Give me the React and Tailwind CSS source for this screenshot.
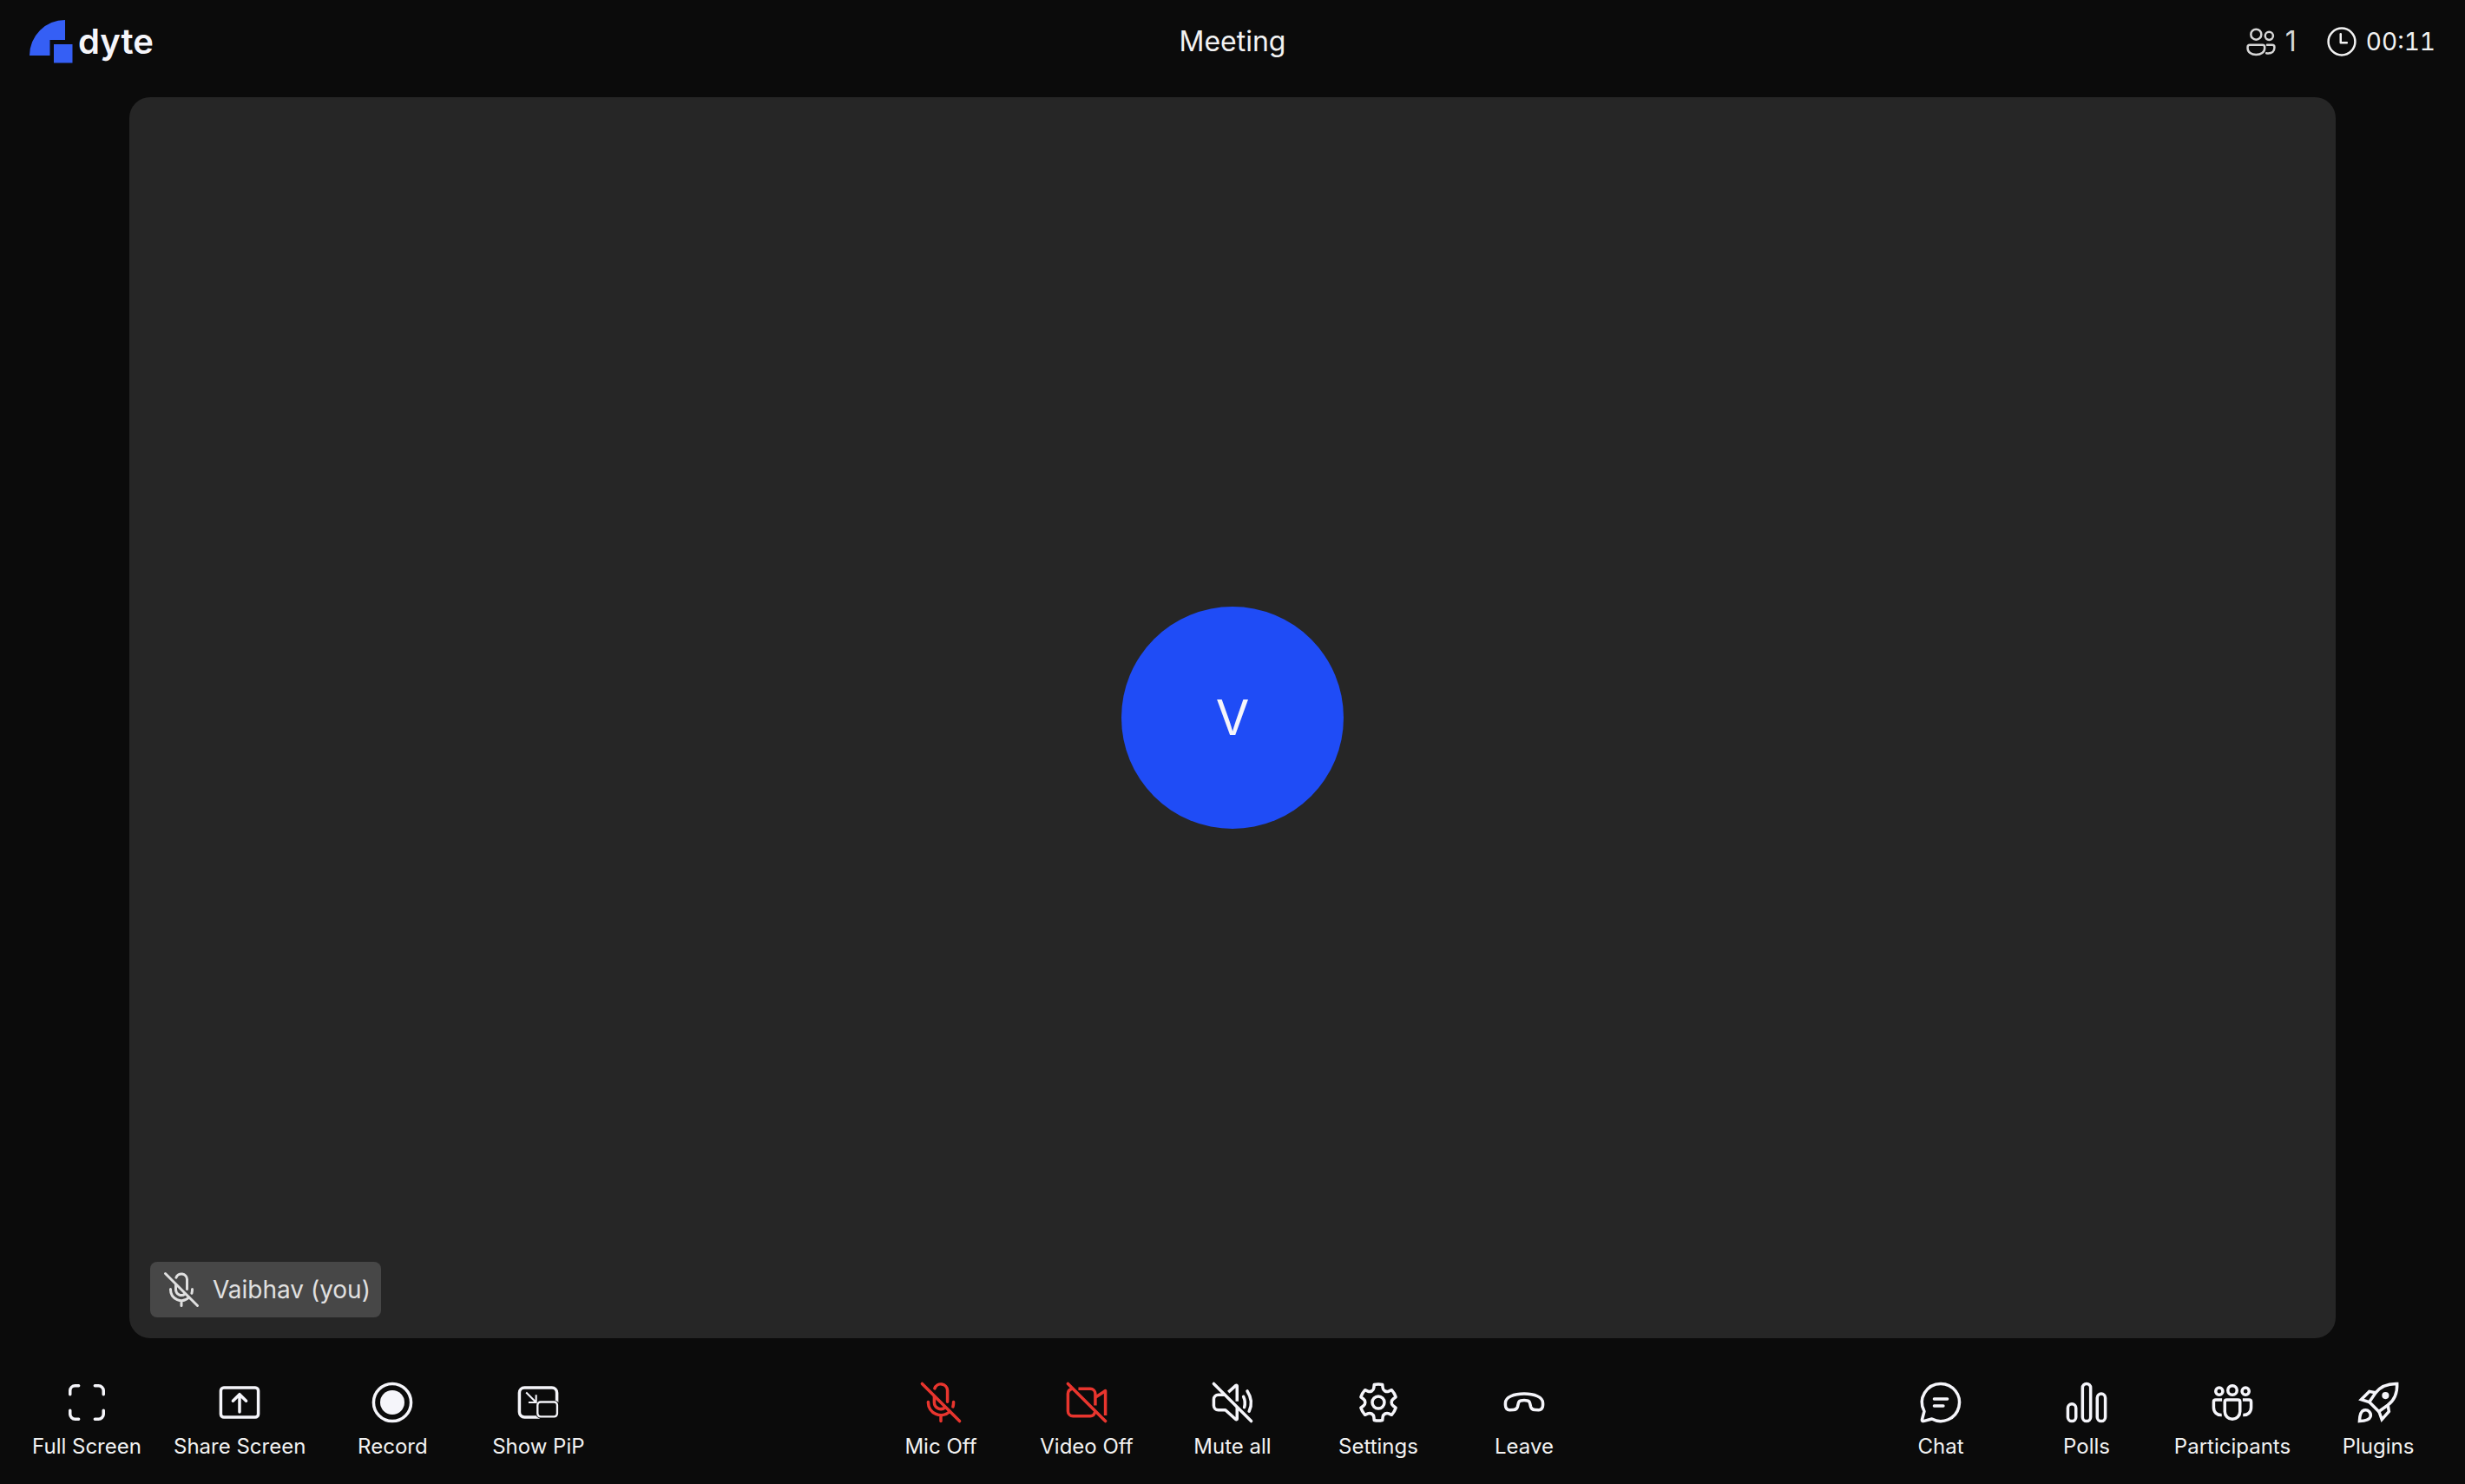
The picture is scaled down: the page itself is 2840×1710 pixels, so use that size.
import React from "react";

function Icon({ className = "size-14", children }) {
  return (
    <svg
      viewBox="0 0 24 24"
      fill="none"
      stroke="currentColor"
      strokeWidth="1.5"
      strokeLinecap="round"
      strokeLinejoin="round"
      aria-hidden="true"
      className={`shrink-0 ${className}`}
    >
      {children}
    </svg>
  );
}

const FullScreenIcon = () => (
  <Icon>
    <path d="M3.75 8V6.25a2.5 2.5 0 0 1 2.5-2.5H8M16 3.75h1.75a2.5 2.5 0 0 1 2.5 2.5V8M20.25 16v1.75a2.5 2.5 0 0 1-2.5 2.5H16M8 20.25H6.25a2.5 2.5 0 0 1-2.5-2.5V16" />
  </Icon>
);

const ShareScreenIcon = () => (
  <Icon>
    <rect x="2.75" y="4.75" width="18.5" height="14.5" rx="1.5" />
    <path d="M12 16.75V8.1M8.75 11.25 12 8l3.25 3.25" />
  </Icon>
);

const RecordIcon = () => (
  <Icon>
    <circle cx="12" cy="12" r="9.25" />
    <circle cx="12" cy="12" r="6" fill="currentColor" stroke="none" />
  </Icon>
);

const PipIcon = () => (
  <Icon>
    <path
      strokeLinecap="butt"
      d="M21.25 12V7.25a2.5 2.5 0 0 0-2.5-2.5H5.25a2.5 2.5 0 0 0-2.5 2.5v9.5a2.500 2.500 0 0 0 2.500 2.500h7.500"
    />
    <rect x="11.700" y="11.800" width="9.700" height="7.200" rx="1.500" stroke="#0b0b0b" strokeWidth="1.800" />
    <rect x="11.700" y="11.800" width="9.700" height="7.200" rx="1.500" strokeWidth="1" />
    <path strokeWidth="0.9" strokeLinecap="square" strokeLinejoin="miter" d="m6.400 7.400 4.400 4.400M11 8.700V12H7.700" />
  </Icon>
);

const MicOffIcon = ({ className }) => (
  <Icon className={className}>
    <path d="m2.75 2.75 18.5 18.5" />
    <path d="M8.95 5.1A3.25 3.25 0 0 1 15.25 6v5.7" />
    <path strokeLinecap="butt" d="M8.75 8.75V12a3.25 3.25 0 0 0 5.3 2.5" />
    <path d="M5.75 11.75v.25a6.25 6.25 0 0 0 10.6 4.5M12 18.4v2.85M18.25 11.75V12c0 .75-.1 1.45-.3 2.1" />
  </Icon>
);

const VideoOffIcon = () => (
  <Icon>
    <path d="m2.75 2.75 18.5 18.5" />
    <path strokeLinecap="butt" d="M7.9 5.25h5.85a2.5 2.5 0 0 1 2.5 2.5v5.8" />
    <path d="M4.6 5.35a2.5 2.5 0 0 0-1.85 2.4v8.5a2.5 2.5 0 0 0 2.5 2.5h8.5a2.5 2.5 0 0 0 2.3-1.9" />
    <path strokeLinecap="butt" d="m16.4 9.4 4.85-3.15v12.2" />
  </Icon>
);

const MuteAllIcon = () => (
  <Icon>
    <path d="m2.75 2.75 18.5 18.5" />
    <path strokeLinecap="butt" d="M9.95 6.9 13.7 3.6c.25-.2.55-.05.55.25v7.6" />
    <path d="M8 8.25H5a2.25 2.25 0 0 0-2.25 2.25v3A2.25 2.25 0 0 0 5 15.75h3.5l5.1 4.6c.25.2.65.05.65-.25v-5.3" />
    <path d="M17.4 9.1c.8 1.7.95 3.5.45 5.3M19.3 6.4c2.1 3.2 2.4 6.8.9 10" />
  </Icon>
);

const SettingsIcon = () => (
  <Icon>
    <path
      fill="currentColor"
      stroke="none"
      d="M12.012 2.25c.734.008 1.466.093 2.182.253a.75.75 0 0 1 .582.649l.17 1.527a1.384 1.384 0 0 0 1.927 1.116l1.401-.615a.75.75 0 0 1 .85.174 9.792 9.792 0 0 1 2.204 3.792.75.75 0 0 1-.271.825l-1.242.916a1.381 1.381 0 0 0 0 2.226l1.243.915a.75.75 0 0 1 .272.826 9.797 9.797 0 0 1-2.204 3.792.75.75 0 0 1-.848.175l-1.407-.617a1.38 1.38 0 0 0-1.926 1.114l-.169 1.526a.75.75 0 0 1-.572.647 9.518 9.518 0 0 1-4.406 0 .75.75 0 0 1-.572-.647l-.168-1.524a1.382 1.382 0 0 0-1.926-1.11l-1.406.616a.75.75 0 0 1-.849-.175 9.798 9.798 0 0 1-2.204-3.796.75.75 0 0 1 .272-.826l1.243-.916a1.38 1.38 0 0 0 0-2.226l-1.243-.914a.75.75 0 0 1-.271-.826 9.793 9.793 0 0 1 2.204-3.792.75.75 0 0 1 .85-.174l1.4.615a1.387 1.387 0 0 0 1.93-1.118l.17-1.526a.75.75 0 0 1 .583-.65c.717-.159 1.45-.243 2.201-.252Zm0 1.5a9.135 9.135 0 0 0-1.354.117l-.109.977A2.886 2.886 0 0 1 6.525 7.17l-.898-.394a8.293 8.293 0 0 0-1.348 2.317l.798.587a2.881 2.881 0 0 1 0 4.643l-.799.588c.32.842.776 1.626 1.348 2.322l.905-.397a2.882 2.882 0 0 1 4.017 2.318l.11.984c.889.15 1.798.15 2.687 0l.11-.984a2.881 2.881 0 0 1 4.018-2.322l.905.396a8.296 8.296 0 0 0 1.347-2.318l-.798-.588a2.881 2.881 0 0 1 0-4.643l.796-.587a8.293 8.293 0 0 0-1.348-2.317l-.896.393a2.884 2.884 0 0 1-4.023-2.324l-.11-.976a8.988 8.988 0 0 0-1.333-.117ZM12 8.25a3.75 3.75 0 1 1 0 7.5 3.75 3.75 0 0 1 0-7.5Zm0 1.5a2.25 2.25 0 1 0 0 4.5 2.25 2.25 0 0 0 0-4.5Z"
    />
  </Icon>
);

const LeaveIcon = () => (
  <Icon>
    <path d="M2.75 12.3v1c0 1.5.9 2.5 2.1 2.45l1.9-.1c1-.05 1.75-.6 2-1.5l.45-1.9c.15-.65.55-1.05 1.15-1.150a10 10 0 0 1 3.300 0c.6.1 1 .5 1.150 1.150l.450 1.900c.25.9 1 1.450 2 1.500l1.900.1c1.200.05 2.100-.95 2.100-2.450v-1C21.250 9.300 17 7.750 12 7.750S2.750 9.300 2.750 12.300Z" />
  </Icon>
);

const ChatIcon = () => (
  <Icon>
    <path d="M12 2.75a9.25 9.25 0 1 1-4.4 17.4l-4.2 1.1a.55.55 0 0 1-.65-.65l1.1-4.2A9.25 9.25 0 0 1 12 2.75ZM8.75 10.25h6.5M8.75 13.75h4.500" />
  </Icon>
);

const PollsIcon = () => (
  <Icon>
    <rect x="2.75" y="12.75" width="4" height="8.5" rx="2" />
    <rect x="10" y="2.75" width="4" height="18.5" rx="2" />
    <rect x="17.25" y="7.75" width="4" height="13.5" rx="2" />
  </Icon>
);

const ParticipantsIcon = () => (
  <Icon>
    <circle cx="12" cy="6" r="2.25" />
    <circle cx="5.5" cy="6.5" r="1.75" />
    <circle cx="18.5" cy="6.5" r="1.75" />
    <path d="M9.25 10.75h5.5a1 1 0 0 1 1 1v4.75a3.75 3.75 0 0 1-7.5 0v-4.75a1 1 0 0 1 1-1Z" />
    <path
      strokeLinecap="butt"
      d="M6.9 10.75H3.75a1 1 0 0 0-1 1V14.5c0 2.3 1.7 3.9 4 3.75M17.1 10.75h3.15a1 1 0 0 1 1 1V14.5c0 2.3-1.7 3.9-4 3.75"
    />
  </Icon>
);

const PluginsIcon = () => (
  <Icon>
    <g strokeLinejoin="miter">
      <path d="M21.3 2.75c-5-.1-8.3 1.4-10.7 4.6l-3 4.4 4.7 4.7 4.4-3.05c3.3-2.4 4.8-5.7 4.6-10.65Z" />
      <path d="M10.6 7.2 7.6 6.6 3.6 10.6l4 1.25M16.8 13.4l.5 3.1-3.500 3.900-1.400-3.900" />
      <path d="M2.75 21.25c.1-3 .8-5 2.2-5.4 2-.6 3.8 1.2 3.2 3.2-.5 1.5-2.3 2.1-5.4 2.2Z" />
    </g>
    <circle cx="15.6" cy="8.6" r="1.75" fill="currentColor" stroke="none" />
  </Icon>
);

const PeopleIcon = () => (
  <Icon className="size-10">
    <circle cx="8.6" cy="7" r="3.6" />
    <circle cx="17.6" cy="8" r="2.75" />
    <path d="M4.25 14.25h8.75a1.5 1.5 0 0 1 1.5 1.5v.75c0 2.8-2.6 4.5-5.9 4.5s-5.85-1.7-5.85-4.5v-.75a1.5 1.5 0 0 1 1.5-1.5Z" />
    <path d="M16.2 14.25h3.55a1.5 1.5 0 0 1 1.5 1.5v.5c0 2.4-1.8 3.85-4.25 3.85-.5 0-.9-.05-1.3-.15" />
  </Icon>
);

const ClockIcon = () => (
  <Icon className="size-10">
    <circle cx="12" cy="12" r="9.25" />
    <path d="M11.25 6.75V12.75h4.25" />
  </Icon>
);

function Logo() {
  return (
    <a href="#" aria-label="dyte" className="flex items-center gap-1.5 text-[#f5f5fa]">
      <svg viewBox="0 0 50 50" className="size-[50px]" fill="#355ff5" aria-hidden="true">
        <path d="M41 0v23H23.5v18H0A41 41 0 0 1 41 0Z" />
        <rect x="28" y="28" width="21.5" height="21.5" />
      </svg>
      <span className="text-[40px] leading-[48px] font-semibold">dyte</span>
    </a>
  );
}

const groups = [
  {
    name: "Screen",
    align: "justify-start",
    items: [
      ["Full Screen", FullScreenIcon],
      ["Share Screen", ShareScreenIcon],
      ["Record", RecordIcon],
      ["Show PiP", PipIcon],
    ],
  },
  {
    name: "Call",
    align: "justify-center",
    items: [
      ["Mic Off", MicOffIcon, true],
      ["Video Off", VideoOffIcon, true],
      ["Mute all", MuteAllIcon],
      ["Settings", SettingsIcon],
      ["Leave", LeaveIcon],
    ],
  },
  {
    name: "Panels",
    align: "justify-end",
    items: [
      ["Chat", ChatIcon],
      ["Polls", PollsIcon],
      ["Participants", ParticipantsIcon],
      ["Plugins", PluginsIcon],
    ],
  },
];

function ControlButton({ label, Glyph, off }) {
  return (
    <button type="button" className="flex min-w-42 flex-col items-center gap-2 px-4 text-2xl leading-[30px]">
      <span className={off ? "text-[#e8352e]" : "text-[#f5f5fa]"}>
        <Glyph />
      </span>
      <span className="whitespace-nowrap">{label}</span>
    </button>
  );
}

export default function App() {
  return (
    <div className="flex h-screen flex-col bg-[#0b0b0b] font-['Inter',sans-serif] text-[#f2f2f2]">
      <header className="grid h-24 shrink-0 grid-cols-[1fr_auto_1fr] items-center px-[34px]">
        <Logo />
        <h1 className="text-[32px] leading-10">Meeting</h1>
        <div className="flex items-center justify-end gap-8">
          <div className="flex items-center gap-2 text-[32px] leading-10 text-[#d6d6d6]">
            <PeopleIcon />
            <span>1</span>
          </div>
          <div className="flex items-center gap-2 text-[28px] leading-10">
            <ClockIcon />
            <time className="tabular-nums">00:11</time>
          </div>
        </div>
      </header>

      <main className="flex min-h-0 flex-1 justify-center pt-4">
        <section className="relative flex aspect-video h-full max-w-full items-center justify-center rounded-3xl bg-[#262626]">
          <div className="flex size-64 items-center justify-center rounded-full bg-[#1f4cf6] text-[56px] text-[#f5f5fa]">
            V
          </div>
          <div className="absolute bottom-6 left-6 flex h-16 items-center gap-3 rounded-lg bg-[#474747] px-3 text-[28px] text-[#e0e0e0]">
            <MicOffIcon className="size-12" />
            <span>Vaibhav (you)</span>
          </div>
        </section>
      </main>

      <footer className="grid shrink-0 grid-cols-[1fr_auto_1fr] px-4 pt-[46px] pb-7">
        {groups.map((group) => (
          <div key={group.name} role="group" aria-label={group.name} className={`flex ${group.align}`}>
            {group.items.map(([label, Glyph, off]) => (
              <ControlButton key={label} label={label} Glyph={Glyph} off={off} />
            ))}
          </div>
        ))}
      </footer>
    </div>
  );
}
